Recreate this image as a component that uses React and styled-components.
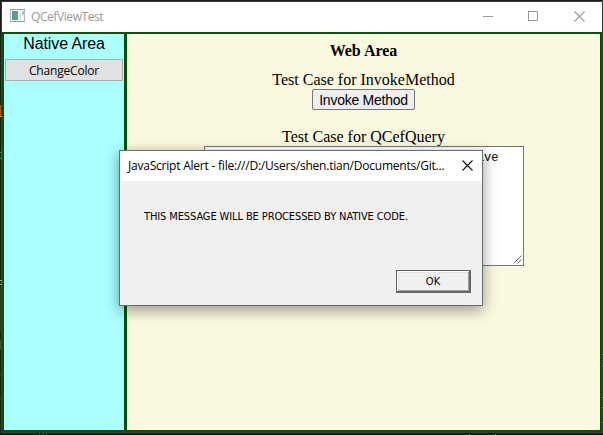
import React from "react";
import styled, { createGlobalStyle } from "styled-components";

const Global = createGlobalStyle`
  * { box-sizing: border-box; }
  html, body { margin: 0; height: 435px; overflow: hidden; background: #1e1a1e; }
`;

const Desktop = styled.div`
  position: relative;
  width: 603px;
  height: 435px;
  padding: 1px 0 0 1px;
  background: #1e1a1e;
`;

const EditorSpeck = styled.i`
  position: absolute;
  left: ${(p) => p.$x}px;
  top: ${(p) => p.$y}px;
  width: ${(p) => p.$w || 1}px;
  height: ${(p) => p.$h || 1}px;
  background: ${(p) => p.$color};
`;

const Window = styled.div`
  width: 602px;
  height: 432px;
  border: 1px solid #3b3b3d;
  display: flex;
  flex-direction: column;
  background: #fff;
`;

const TitleBar = styled.header`
  height: 30px;
  flex: none;
  display: flex;
  align-items: flex-start;
  padding-left: 8px;
  color: #999;
`;

const TitleIcon = styled.svg`
  display: block;
  margin-top: 7px;
`;

const WindowTitle = styled.span`
  flex: 1;
  margin: 7px 0 0 6px;
  font: 12px/16px "Open Sans", sans-serif;
  letter-spacing: -0.42px;
`;

const CaptionButtons = styled.div`
  display: flex;
  align-items: flex-start;
  gap: 35px;
  padding: 9px 17px 0 0;

  svg { display: block; }
  svg:last-child { margin-left: 1px; }
`;

const Body = styled.main`
  flex: 1;
  display: flex;
  border: 2px solid #005500;
`;

const NativeArea = styled.aside`
  width: 120px;
  background: #aaffff;
  padding: 0 1px;
`;

const NativeHeading = styled.div`
  height: 25px;
  padding-top: 1px;
  text-align: center;
  color: #000;
  font: 16px/18px "Liberation Sans", sans-serif;
  letter-spacing: -0.1px;
`;

const NativeButton = styled.button`
  display: block;
  width: 118px;
  height: 22px;
  padding: 2px 0 0;
  border: 1px solid #adadad;
  background: #e1e1e1;
  color: #000;
  font: 12px/18px "Open Sans", sans-serif;
  letter-spacing: -0.18px;
`;

const WebArea = styled.section`
  flex: 1;
  border-left: 3px solid #005500;
  background: #faf8de;
  padding-top: 8px;
  display: flex;
  flex-direction: column;
  align-items: center;
  color: #000;
  font: 16px/18px "Liberation Serif", serif;
`;

const WebHeading = styled.strong`
  margin-bottom: 11px;
`;

const WebButton = styled.button`
  width: 103px;
  height: 21px;
  margin-bottom: 18px;
  padding: 0;
  border: 1px solid #767676;
  border-radius: 2px;
  background: #efefef;
  color: #000;
  white-space: nowrap;
  font: 14px/18px "Liberation Sans", sans-serif;
  letter-spacing: -0.25px;
`;

const QueryBox = styled.div`
  position: relative;
  width: 320px;
  height: 120px;
  border: 1px solid #767676;
  background: #fff;
  padding: 4px 24px 0 0;
  text-align: right;
  font: 12px/15px "Liberation Mono", monospace;
`;

const Grip = styled.svg`
  position: absolute;
  right: 1px;
  bottom: 1px;
`;

const Dialog = styled.div`
  position: absolute;
  left: 119px;
  top: 150px;
  width: 364px;
  height: 156px;
  border: 1px solid #65706c;
  background: #f0f0f0;
  box-shadow: 0 4px 14px rgba(0, 0, 0, 0.4);
  display: flex;
  flex-direction: column;
  color: #000;
`;

const DialogTitleBar = styled.header`
  height: 30px;
  background: #fff;
  display: flex;
  align-items: center;
  justify-content: space-between;
  padding: 0 9px 1px 8px;
  white-space: nowrap;
  font: 12px/16px "Open Sans", sans-serif;
  letter-spacing: -0.22px;
`;

const DialogMessage = styled.p`
  flex: 1;
  margin: 0;
  padding: 28px 0 0 24px;
  white-space: nowrap;
  font: 11px/16px "DejaVu Sans Condensed", "DejaVu Sans", sans-serif;
  font-stretch: condensed;
  letter-spacing: -0.11px;
`;

const OkButton = styled.button`
  align-self: flex-end;
  width: 75px;
  height: 23px;
  margin: 0 11px 12px 0;
  padding: 1px 0 0;
  border: 1px solid #646464;
  border-right-width: 2px;
  border-bottom-width: 2px;
  box-shadow: inset 1px 1px #fff, inset -1px -1px #a0a0a0, inset 2px 2px #e3e3e3;
  background: #f0f0f0;
  color: #000;
  font: 11px/19px "DejaVu Sans Condensed", "DejaVu Sans", sans-serif;
  font-stretch: condensed;
`;

const specks = [
  [0, 105, 1, 11, "#b84a24"], [0, 116, 2, 1, "#d9b400"],
  [0, 152, 2, 1, "#4b8052"], [0, 158, 2, 1, "#4b8052"], [1, 148, 1, 12, "#356947"],
  [0, 280, 2, 1, "#a4a66c"], [0, 284, 2, 1, "#a4a66c"], [1, 281, 1, 3, "#42779a"],
  [0, 287, 1, 44, "#333034"], [0, 340, 1, 10, "#49464a"],
  [0, 374, 2, 1, "#444"], [0, 398, 2, 1, "#444"],
  [39, 433, 1, 2, "#444"], [42, 433, 2, 2, "#333"], [46, 433, 1, 2, "#444"],
  [469, 434, 1, 1, "#777"], [495, 434, 1, 1, "#777"],
  [602, 354, 1, 1, "#777"], [602, 360, 1, 1, "#555"], [602, 364, 1, 3, "#465566"],
  [602, 397, 1, 1, "#777"], [602, 407, 1, 1, "#777"], [602, 422, 1, 1, "#666"],
];

function AppIcon() {
  return (
    <TitleIcon width="15" height="13" viewBox="0 0 15 13">
      <defs>
        <linearGradient id="pane" x1="0" y1="0" x2="1" y2="1">
          <stop offset="0" stopColor="#5a8dac" />
          <stop offset="1" stopColor="#5bab7c" />
        </linearGradient>
      </defs>
      <rect x=".5" y=".5" width="14" height="12" fill="#f8f8f8" stroke="#b4babf" />
      <path d="M0 .5h15M0 12.500h15" stroke="#929a9f" />
      <rect x="2" y="2" width="6" height="9" fill="url(#pane)" />
      <rect x="9" y="2" width="2" height="9" fill="#e2e2e2" />
      <rect x="12" y="2" width="2" height="4" fill="#9cc6bd" />
    </TitleIcon>
  );
}

function Cross({ color }) {
  return (
    <svg width="11" height="11" viewBox="0 0 11 11">
      <path d="M.5.5l10 10M10.500.5l-10 10" stroke={color} strokeWidth="1.1" fill="none" />
    </svg>
  );
}

export default function App() {
  return (
    <Desktop>
      <Global />
      <Window>
        <TitleBar>
          <AppIcon />
          <WindowTitle>QCefViewTest</WindowTitle>
          <CaptionButtons>
            <svg width="10" height="10"><path d="M0 5.500h10" stroke="#999" /></svg>
            <svg width="10" height="10"><rect x=".5" y=".5" width="9" height="9" fill="none" stroke="#999" /></svg>
            <Cross color="#999" />
          </CaptionButtons>
        </TitleBar>
        <Body>
          <NativeArea>
            <NativeHeading>Native Area</NativeHeading>
            <NativeButton>ChangeColor</NativeButton>
          </NativeArea>
          <WebArea>
            <WebHeading>Web Area</WebHeading>
            <span>Test Case for InvokeMethod</span>
            <WebButton>Invoke Method</WebButton>
            <span>Test Case for QCefQuery</span>
            <QueryBox>
              ive
              <Grip width="9" height="9">
                <path d="M.5 8.500l8-8M4.500 8.500l4-4" stroke="#666" fill="none" />
              </Grip>
            </QueryBox>
          </WebArea>
        </Body>
      </Window>
      {specks.map(([x, y, w, h, color]) => (
        <EditorSpeck key={`${x}-${y}`} $x={x} $y={y} $w={w} $h={h} $color={color} />
      ))}
      <Dialog>
        <DialogTitleBar>
          <span>JavaScript Alert - file:///D:/Users/shen.tian/Documents/Git...</span>
          <Cross color="#111" />
        </DialogTitleBar>
        <DialogMessage>THIS MESSAGE WILL BE PROCESSED BY NATIVE CODE.</DialogMessage>
        <OkButton>OK</OkButton>
      </Dialog>
    </Desktop>
  );
}
